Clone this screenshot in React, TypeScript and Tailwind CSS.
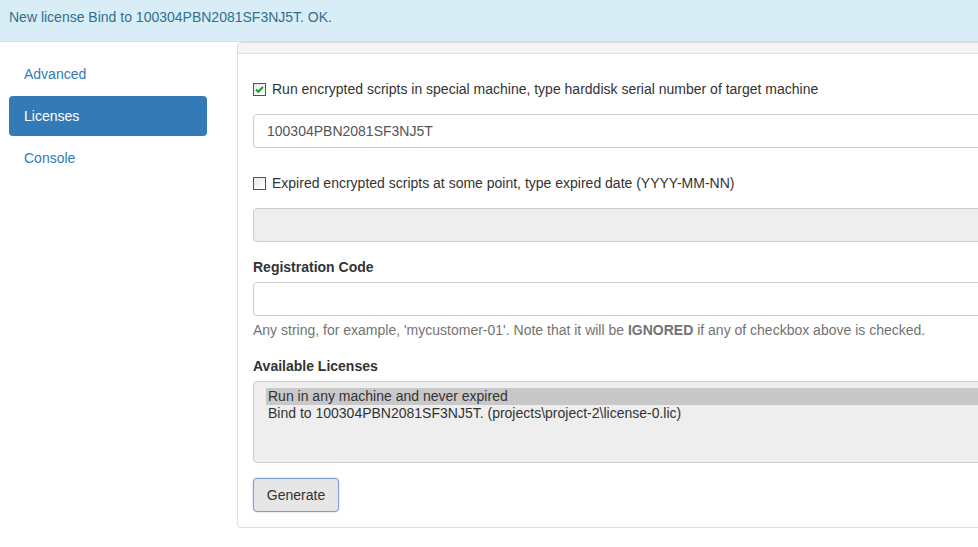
const navItems = ["Advanced", "Licenses", "Console"];

const licenses = [
  "Run in any machine and never expired",
  "Bind to 100304PBN2081SF3NJ5T. (projects\\project-2\\license-0.lic)",
];

function Check({ checked }: { checked?: boolean }) {
  return (
    <span className="w-[13px] h-[13px] border border-[#3c5a78] bg-gradient-to-br from-[#e6e9ee] to-white flex items-center justify-center shrink-0">
      {checked && (
        <svg width="9" height="9" viewBox="0 0 9 9">
          <path d="M1 4.5l2.3 2.3L8 2" fill="none" stroke="#21a121" strokeWidth={2} />
        </svg>
      )}
    </span>
  );
}

export default function App() {
  return (
    <div className="w-[978px] h-[547px] overflow-hidden bg-white font-['Liberation_Sans',Arial,sans-serif] text-[14px] leading-5 text-[#333]">
      <div className="h-[42px] bg-[#d9edf7] border-b border-[#bce8f1] text-[#31708f] px-[9px] pt-[7px]">
        New license Bind to 100304PBN2081SF3NJ5T. OK.
      </div>
      <div className="flex">
        <nav className="w-[198px] ml-[9px] mt-[12px] flex flex-col gap-[2px] shrink-0">
          {navItems.map((item) => (
            <div
              key={item}
              className={
                item === "Licenses"
                  ? "h-[40px] px-[15px] flex items-center rounded-[4px] bg-[#337ab7] text-white"
                  : "h-[40px] px-[15px] flex items-center text-[#337ab7]"
              }
            >
              {item}
            </div>
          ))}
        </nav>
        <div className="ml-[30px] w-[800px] shrink-0 border border-[#ddd] rounded-[4px]">
          <div className="h-[11px] bg-[#f5f5f5] border-b border-[#ddd] rounded-t-[4px]" />
          <div className="px-[15px] pt-[25px] pb-[15px] flex flex-col">
            <label className="flex items-center gap-[6px] h-5">
              <Check checked />
              <span>Run encrypted scripts in special machine, type harddisk serial number of target machine</span>
            </label>
            <div className="mt-[15px] h-[34px] border border-[#ccc] rounded-[4px] px-[13px] flex items-center text-[#555]">
              100304PBN2081SF3NJ5T
            </div>
            <label className="flex items-center gap-[6px] h-5 mt-[25px]">
              <Check />
              <span>Expired encrypted scripts at some point, type expired date (YYYY-MM-NN)</span>
            </label>
            <div className="mt-[15px] h-[34px] border border-[#ccc] rounded-[4px] bg-[#eee]" />
            <div className="mt-[15px] font-bold">Registration Code</div>
            <div className="mt-[5px] h-[34px] border border-[#ccc] rounded-[4px]" />
            <p className="mt-[4px] text-[#737373]">
              Any string, for example, 'mycustomer-01'. Note that it will be <b>IGNORED</b> if any of checkbox above is checked.
            </p>
            <div className="mt-[16px] font-bold">Available Licenses</div>
            <div className="mt-[5px] h-[82px] border border-[#ccc] rounded-[4px] bg-[#eee] pl-[12px] pt-[6px] text-[#333]">
              {licenses.map((l, i) => (
                <div key={l} className={i === 0 ? "h-[17px] leading-[17px] pl-[2px] bg-[#c8c8c8]" : "h-[17px] leading-[17px] pl-[2px]"}>
                  {l}
                </div>
              ))}
            </div>
            <div className="mt-[15px]">
              <button className="h-[34px] w-[86px] border border-[#7f9fd4] rounded-[4px] bg-[#e6e6e6] text-[#333] shadow-[0_0_2px_rgba(102,140,220,0.5)]">
                Generate
              </button>
            </div>
          </div>
        </div>
      </div>
    </div>
  );
}
